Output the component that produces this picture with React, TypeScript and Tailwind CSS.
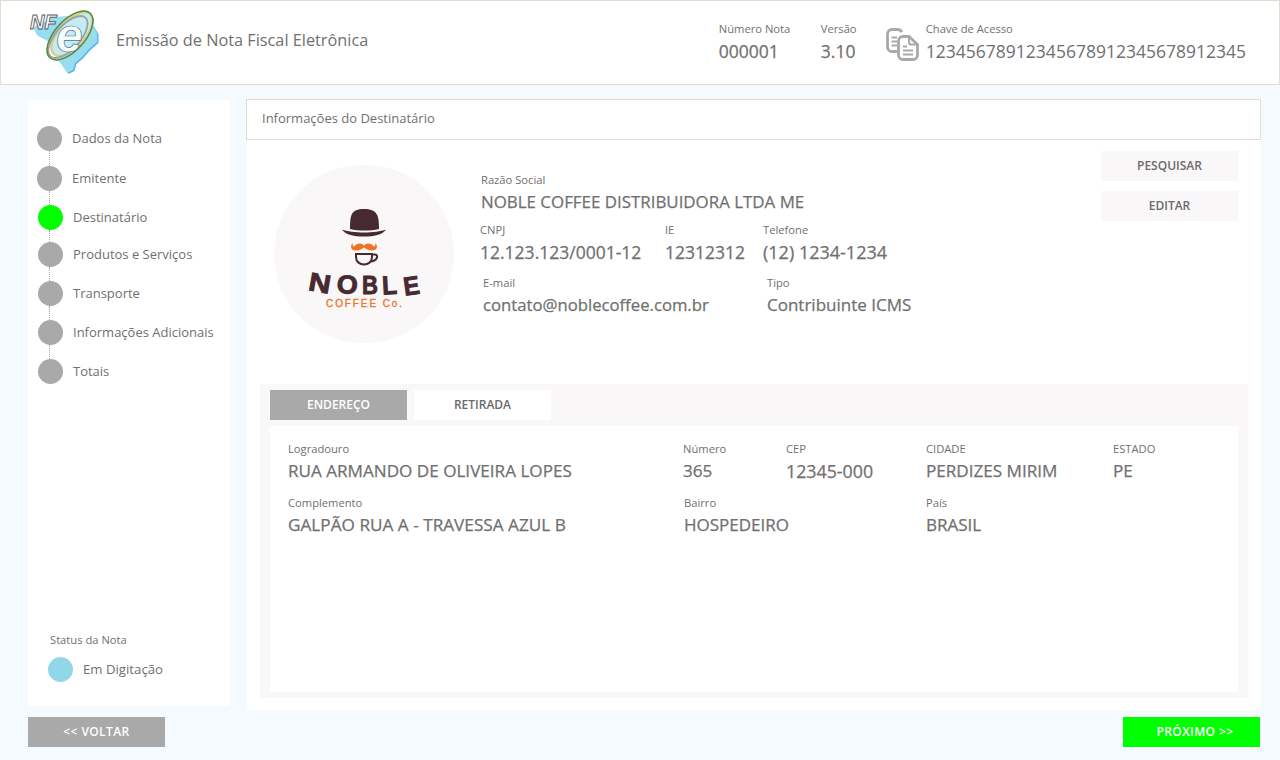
import React from 'react';

const font = { fontFamily: '"Open Sans", "Noto Sans", sans-serif' };

const steps = [
  { name: 'Dados da Nota', gap: 'h-[15px]', pad: 'pl-[9px]' },
  { name: 'Emitente', gap: 'h-[14px]', pad: 'pl-[9px]' },
  { name: 'Destinatário', gap: 'h-[12px]', pad: 'pl-[10px]', active: true },
  { name: 'Produtos e Serviços', gap: 'h-[14px]', pad: 'pl-[10px]' },
  { name: 'Transporte', gap: 'h-[14px]', pad: 'pl-[10px]' },
  { name: 'Informações Adicionais', gap: 'h-[14px]', pad: 'pl-[10px]' },
  { name: 'Totais', gap: '', pad: 'pl-[10px]' },
];

const NfeLogo = () => (
  <svg width="72" height="81" viewBox="0 0 72 81" className="shrink-0">
    <path d="M5 25 L15 21 L25 15 L42 14 L54 11 L60 18 L64 23 L69 31 L69 40 L60 48 L54 55 L47 61 L45 68 L39 71 L34 63 L29 57 L24 43 L17 37 L9 33 Z" fill="#5fb4ea" transform="translate(1.500 1)" />
    <path d="M5 25 L15 21 L25 15 L42 14 L54 11 L60 18 L64 23 L69 31 L69 40 L60 48 L54 55 L47 61 L45 68 L39 71 L34 63 L29 57 L24 43 L17 37 L9 33 Z" fill="#98dcf0" />
    <ellipse cx="44" cy="32" rx="13" ry="27" transform="rotate(42 44 32)" fill="#c4ecf6" stroke="#d6cf8e" strokeWidth="2.500" />
    <ellipse cx="40" cy="35" rx="12" ry="26" transform="rotate(42 40 35)" fill="none" stroke="#a0a0a0" strokeWidth="1.800" />
    <ellipse cx="42" cy="33.500" rx="15" ry="30" transform="rotate(42 42 33.500)" fill="none" stroke="#4f8a3a" strokeWidth="1.500" />
    <g fontFamily="Liberation Sans" fontStyle="italic" fontWeight="700">
      <text x="2" y="27" fontSize="20" fill="#ffffff" stroke="#5a5a5a" strokeWidth="0.900">NF</text>
      <text x="28" y="50" fontSize="48" fill="#f6fcfe" stroke="#51737f" strokeWidth="0.700">e</text>
    </g>
  </svg>
);

const CopyIcon = () => (
  <svg width="33" height="33" viewBox="0 0 33 33" fill="none" stroke="#a9a9a9" strokeWidth="2.800" className="shrink-0">
    <path d="M16 4 Q14.500 1.500 11 1.500 H6 a4.500 4.500 0 0 0-4.500 4.500 V19 a4.500 4.500 0 0 0 4.500 4.500 H11" />
    <path d="M5.500 9.500 H11 M5.500 13.500 H11 M5.500 17.500 H11" strokeWidth="2" />
    <path d="M17 8.500 H23 L31.500 16.500 V27 a4.500 4.500 0 0 1-4.500 4.500 H17 a4.500 4.500 0 0 1-4.500-4.500 V13 a4.500 4.500 0 0 1 4.500-4.500 Z" />
    <path d="M23 9 V14.500 a2 2 0 0 0 2 2 H31" strokeWidth="2" />
    <path d="M17 18.500 H21 M17 22.500 H27 M17 26.500 H27" strokeWidth="2" />
  </svg>
);

const NobleLogo = () => (
  <div className="w-[180px] h-[178px] rounded-full bg-[#f9f7f8] shrink-0">
    <svg width="180" height="178" viewBox="0 0 180 178">
      <path d="M76 64 C76 50 77 44 90 44 C103 44 105 50 105 64 C96 66 85 66 76 64 Z" fill="#472a30" />
      <path d="M68 64.500 C78 68.500 102 68.500 112 64.500 C108 70 100 71.500 90 71.500 C80 71.500 72 70 68 64.500 Z" fill="#472a30" />
      <path d="M90 80.500 C87 77.500 83 78 80.500 81 C79.500 82 78.500 81 78.500 78 C75.500 82 77.500 85.500 82 85.500 C85.500 85.500 88.500 84 90 82.500 C91.500 84 94.500 85.500 98 85.500 C102.500 85.500 104.500 82 101.500 78 C101.500 81 100.500 82 99.500 81 C97 78 93 77.500 90 80.500 Z" fill="#ef7326" />
      <path d="M82 89 H98 V92 C98 97 94 99.500 90 99.500 C86 99.500 82 97 82 92 Z" fill="none" stroke="#472a30" strokeWidth="2" />
      <path d="M98 89.500 H101 C104.500 89.500 104 95.500 97 96.500" fill="none" stroke="#472a30" strokeWidth="2" />
      <g fontFamily="Liberation Sans" fontWeight="700" fontSize="26" fill="#472a30" stroke="#472a30" strokeWidth="0.900">
        <text x="35" y="127" textLength="22" lengthAdjust="spacingAndGlyphs" transform="rotate(10 46 118)">N</text>
        <text x="63" y="128.500" textLength="21" lengthAdjust="spacingAndGlyphs" transform="rotate(4 73 118)">O</text>
        <text x="88" y="129" textLength="16" lengthAdjust="spacingAndGlyphs">B</text>
        <text x="108" y="129" textLength="15" lengthAdjust="spacingAndGlyphs" transform="rotate(-3 116 118)">L</text>
        <text x="129" y="130" textLength="16" lengthAdjust="spacingAndGlyphs" transform="rotate(-8 136 118)">E</text>
      </g>
      <text x="52" y="142" fontFamily="Liberation Sans" fontSize="10" textLength="76" fill="#ef7326" stroke="#ef7326" strokeWidth="0.300">COFFEE Co.</text>
    </svg>
  </div>
);

const Field = ({ label, value, className = '', valueClass = 'text-[17.1px]' }: { label: string; value: string; className?: string; valueClass?: string }) => (
  <div className={className}>
    <div className="text-[11.2px] leading-[16px] text-[#707070]">{label}</div>
    <div className={`mt-[2px] leading-[24px] text-[#707070] [-webkit-text-stroke:0.25px_#707070] whitespace-nowrap ${valueClass}`}>{value}</div>
  </div>
);

export default function App() {
  return (
    <div style={font} className="w-[1280px] h-[760px] overflow-hidden bg-[#f5faff] flex flex-col">
      <header className="h-[85px] shrink-0 bg-white border border-[#dde0cf] flex items-center pl-[27px]">
        <NfeLogo />
        <div className="ml-[16px] mb-[4px] text-[16.3px] text-[#707070]">Emissão de Nota Fiscal Eletrônica</div>
        <div className="ml-auto flex items-start pr-[33px] mb-[1px]">
          <div className="w-[102px]">
            <div className="text-[11.2px] leading-[16px] text-[#707070]">Número Nota</div>
            <div className="mt-[1px] text-[17.5px] leading-[26px] text-[#707070] [-webkit-text-stroke:0.25px_#707070]">000001</div>
          </div>
          <div className="w-[65px]">
            <div className="text-[11.2px] leading-[16px] text-[#707070]">Versão</div>
            <div className="mt-[1px] text-[17.5px] leading-[26px] text-[#707070] [-webkit-text-stroke:0.25px_#707070]">3.10</div>
          </div>
          <div className="mt-[7px]"><CopyIcon /></div>
          <div className="ml-[7px]">
            <div className="text-[11.2px] leading-[16px] text-[#707070]">Chave de Acesso</div>
            <div className="mt-[1px] text-[17.5px] leading-[26px] text-[#707070]">12345678912345678912345678912345</div>
          </div>
        </div>
      </header>

      <div className="flex items-start pl-[28px] pt-[14px]">
        <aside className="w-[202px] h-[606px] mt-[1px] bg-white flex flex-col">
          <div className="pt-[26px]">
            {steps.map((s) => (
              <div key={s.name}>
                <div className={`flex items-center h-[25px] ${s.pad}`}>
                  <span className={`w-[25px] h-[25px] rounded-full shrink-0 ${s.active ? 'bg-[#00ff00]' : 'bg-[#a9a9a9]'}`} />
                  <span className="ml-[10px] text-[13px] text-[#707070] whitespace-nowrap">{s.name}</span>
                </div>
                {s.gap && <div className={`${s.gap} ml-[21px] border-l border-dotted border-[#a9a9a9]`} />}
              </div>
            ))}
          </div>
          <div className="mt-auto pb-[24px] pl-[20px]">
            <div className="pl-[2px] text-[11.2px] leading-[16px] text-[#707070]">Status da Nota</div>
            <div className="mt-[9px] flex items-center">
              <span className="w-[25px] h-[25px] rounded-full bg-[#92d7e7]" />
              <span className="ml-[10px] text-[13.2px] text-[#707070]">Em Digitação</span>
            </div>
          </div>
        </aside>

        <main className="ml-[17px] w-[1014px]">
          <div className="h-[41px] -ml-px bg-white border border-[#dde0cf] flex items-center pl-[15px] pb-[1px] text-[13px] text-[#707070]">Informações do Destinatário</div>
          <div className="h-[570px] bg-white px-[13px]">
            <div className="h-[244px] flex">
              <div className="ml-[14px] mt-[25px]"><NobleLogo /></div>
              <div className="ml-[26px] mt-[32px] flex flex-col">
                <Field className="ml-[1px]" valueClass="text-[16.9px]" label="Razão Social" value="NOBLE COFFEE DISTRIBUIDORA LTDA ME" />
                <div className="flex mt-[8px]">
                  <Field className="w-[185px]" valueClass="text-[17.5px]" label="CNPJ" value="12.123.123/0001-12" />
                  <Field className="w-[98px]" valueClass="text-[17.5px]" label="IE" value="12312312" />
                  <Field valueClass="text-[18px]" label="Telefone" value="(12) 1234-1234" />
                </div>
                <div className="flex mt-[11px] ml-[3px]">
                  <Field className="w-[284px]" valueClass="text-[16.7px]" label="E-mail" value="contato@noblecoffee.com.br" />
                  <Field valueClass="text-[17px]" label="Tipo" value="Contribuinte ICMS" />
                </div>
              </div>
              <div className="ml-auto mr-[10px] mt-[11px] flex flex-col gap-[10px]">
                <button className="w-[137px] h-[30px] bg-[#f9f7f8] text-[12px] font-semibold text-[#6b6b6b]">PESQUISAR</button>
                <button className="w-[137px] h-[30px] bg-[#f9f7f8] text-[12px] font-semibold text-[#6b6b6b]">EDITAR</button>
              </div>
            </div>
            <div className="h-[314px] bg-[#f9f7f8] px-[10px] pt-[6px] flex flex-col">
              <div className="flex gap-[7px]">
                <div className="w-[137px] h-[30px] bg-[#a9a9a9] text-white text-[12px] font-semibold flex items-center justify-center">ENDEREÇO</div>
                <div className="w-[137px] h-[30px] bg-white text-[#6b6b6b] text-[12px] font-semibold flex items-center justify-center">RETIRADA</div>
              </div>
              <div className="mt-[6px] h-[266px] bg-white px-[18px] pt-[15px]">
                <div className="flex">
                  <Field className="w-[395px]" label="Logradouro" value="RUA ARMANDO DE OLIVEIRA LOPES" />
                  <Field className="w-[103px]" label="Número" value="365" />
                  <Field className="w-[140px]" valueClass="text-[17.8px]" label="CEP" value="12345-000" />
                  <Field className="w-[187px]" label="CIDADE" value="PERDIZES MIRIM" />
                  <Field label="ESTADO" value="PE" />
                </div>
                <div className="flex mt-[12px]">
                  <Field className="w-[396px]" valueClass="text-[17.2px]" label="Complemento" value="GALPÃO RUA A - TRAVESSA AZUL B" />
                  <Field className="w-[242px]" valueClass="text-[17px]" label="Bairro" value="HOSPEDEIRO" />
                  <Field valueClass="text-[17px]" label="País" value="BRASIL" />
                </div>
              </div>
            </div>
          </div>
        </main>
      </div>

      <div className="flex justify-between pl-[28px] pr-[20px] mt-[7px]">
        <button className="w-[137px] h-[30px] bg-[#a9a9a9] text-white text-[12px] font-semibold tracking-[0.4px]">&lt;&lt; VOLTAR</button>
        <button className="w-[137px] h-[30px] pl-[7px] bg-[#00ff00] text-white text-[12px] font-semibold tracking-[0.4px]">PRÓXIMO &gt;&gt;</button>
      </div>
    </div>
  );
}
